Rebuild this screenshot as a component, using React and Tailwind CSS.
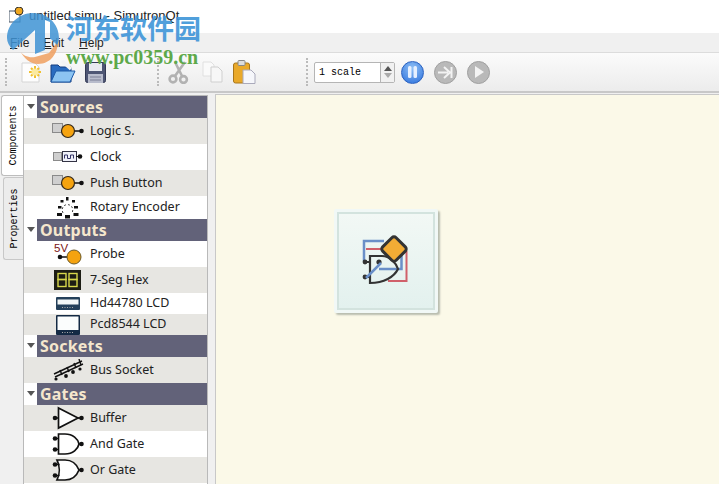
const sans = { fontFamily: '"Noto Sans", "Open Sans", sans-serif' };

function Pin({ x = 0, y = 0 }) { return <circle cx={x} cy={y} r="2.3" fill="#111" />; }

const Icons = {
  logic: () => (<svg width="32" height="20" viewBox="0 0 32 20"><rect x="0.5" y="2.5" width="10" height="9" fill="#cfcfcf" stroke="#8a8a8a" /><line x1="16" y1="10" x2="30" y2="10" stroke="#111" strokeWidth="1.5" /><Pin x={29.5} y={10} /><circle cx="16" cy="10" r="6.5" fill="#f5a30f" stroke="#33281a" strokeWidth="1.2" /></svg>),
  clock: () => (<svg width="32" height="20" viewBox="0 0 32 20"><rect x="1.5" y="5.5" width="8" height="8" fill="#cfcfcf" stroke="#8a8a8a" /><rect x="10.5" y="4.5" width="14" height="10" fill="#eef0f8" stroke="#334" /><path d="M12.5 11.5V8h3v3.5h3V8h3v3.5" fill="none" stroke="#336" /><line x1="24" y1="9.5" x2="29" y2="9.5" stroke="#111" /><Pin x={28} y={9.5} /></svg>),
  rotary: () => (<svg width="32" height="22" viewBox="0 0 32 22"><g fill="#111"><rect x="14" y="0" width="2.5" height="3.5" /><rect x="8.5" y="3" width="3" height="2.5" /><rect x="20" y="3" width="3" height="2.5" /><rect x="6" y="9" width="3.5" height="2.5" /><rect x="22" y="9" width="4" height="2.5" /><rect x="5" y="16" width="5" height="3" /><rect x="21.5" y="16" width="5" height="3" /><rect x="13" y="18" width="5" height="3.5" /></g><path d="M11 16C9 12 11 8 15 7.5C20 7.5 22 12 20 16" fill="none" stroke="#444" strokeDasharray="2 2" /></svg>),
  probe: () => (<svg width="32" height="26" viewBox="0 0 32 26"><text x="2" y="11" fontSize="11.5" fill="#7a1414" fontFamily="Liberation Sans">5V</text><line x1="8" y1="16" x2="18" y2="16" stroke="#111" strokeWidth="1.5" /><Pin x={8} y={16} /><circle cx="22" cy="16" r="7" fill="#f5a30f" stroke="#6b5a2a" /></svg>),
  seg: () => (<svg width="32" height="20" viewBox="0 0 32 20"><rect x="2" width="27" height="20" fill="#1d1d14" /><g fill="none" stroke="#d8d84a" strokeWidth="1.4"><rect x="6" y="3.5" width="8" height="6" /><rect x="6" y="9.5" width="8" height="7" /><rect x="17" y="3.5" width="8" height="6" /><rect x="17" y="9.5" width="8" height="7" /></g></svg>),
  hd: () => (<svg width="32" height="13" viewBox="0 0 32 13"><rect x="4" y="0" width="24" height="13" rx="1" fill="#24405a" /><rect x="5.5" y="2.5" width="21" height="5" fill="#f3f7f7" /><path d="M10 10.5h12" stroke="#aaa" strokeDasharray="1 1.5" /></svg>),
  pcd: () => (<svg width="32" height="20" viewBox="0 0 32 20"><rect x="4" y="0" width="24" height="20" rx="1" fill="#142a44" /><rect x="5.5" y="1.5" width="21" height="13.5" fill="#fbfdfd" /><path d="M10 17.5h12" stroke="#aaa" strokeDasharray="1 1.5" /></svg>),
  bus: () => (<svg width="32" height="22" viewBox="0 0 32 22"><g stroke="#111" strokeWidth="1.4"><line x1="2" y1="15" x2="30" y2="2" /><line x1="3" y1="18" x2="31" y2="5" /><line x1="8" y1="11" x2="10" y2="16" /><line x1="15" y1="8" x2="17" y2="13" /><line x1="22" y1="4" x2="24" y2="9" /><line x1="27" y1="0" x2="29" y2="6" /></g><g fill="#111"><circle cx="4" cy="20" r="1.6" /><circle cx="14" cy="17" r="1.9" /><circle cx="21" cy="13" r="1.9" /><circle cx="28" cy="10" r="1.6" /></g></svg>),
  buffer: () => (<svg width="32" height="24" viewBox="0 0 32 24"><path d="M6.5 2L26 12L6.5 22Z" fill="#fff" stroke="#111" strokeWidth="1.7" /><line x1="2" y1="12" x2="6" y2="12" stroke="#111" strokeWidth="1.5" /><line x1="26" y1="12" x2="30" y2="12" stroke="#111" strokeWidth="1.5" /><Pin x={3} y={12} /><Pin x={29.5} y={12} /></svg>),
  and: () => (<svg width="32" height="24" viewBox="0 0 32 24"><path d="M6.5 2H13C21 2 26 7 27 12C26 17 21 22 13 22H6.5Z" fill="#fff" stroke="#111" strokeWidth="1.7" /><path d="M2 6.5H6.5M2 17.5H6.5M27 12H31" stroke="#111" strokeWidth="1.5" /><Pin x={3} y={6.5} /><Pin x={3} y={17.5} /><Pin x={29.5} y={12} /></svg>),
  or: () => (<svg width="32" height="24" viewBox="0 0 32 24"><path d="M5 2H13C21 2 25 7 27 12C25 17 21 22 13 22H5C8 16 8 8 5 2Z" fill="#fff" stroke="#111" strokeWidth="1.7" /><path d="M2 6.5H7.5M2 17.5H7.5M27 12H31" stroke="#111" strokeWidth="1.5" /><Pin x={3} y={6.5} /><Pin x={3} y={17.5} /><Pin x={29.5} y={12} /></svg>),
};

const sections = [
  { title: 'Sources', rows: [
    ['Logic S.', 'logic', 'h-[26px]', true], ['Clock', 'clock', 'h-[26px]', false], ['Push Button', 'logic', 'h-[26px]', true], ['Rotary Encoder', 'rotary', 'h-[23px]', false] ] },
  { title: 'Outputs', rows: [
    ['Probe', 'probe', 'h-[26px]', false], ['7-Seg Hex', 'seg', 'h-[26px]', true], ['Hd44780 LCD', 'hd', 'h-[21px]', false], ['Pcd8544 LCD', 'pcd', 'h-[21px]', true] ] },
  { title: 'Sockets', rows: [['Bus Socket', 'bus', 'h-[26px]', true]] },
  { title: 'Gates', rows: [
    ['Buffer', 'buffer', 'h-[26px]', true], ['And Gate', 'and', 'h-[26px]', false], ['Or Gate', 'or', 'h-[26px]', true] ] },
];

function Grip() { return <div className="w-[3px] h-[28px] mx-[2px] border-l-2 border-dotted border-[#bbb]" />; }

function RoundBtn({ blue, children }) {
  return (
    <div className={blue ? 'w-[23px] h-[23px] rounded-full flex items-center justify-center bg-[radial-gradient(circle_at_50%_30%,#8fc0f5,#2a6fdc)] border border-[#2b62c0]' : 'w-[23px] h-[23px] rounded-full flex items-center justify-center bg-[#b9b9b9] border border-[#a0a0a0]'}>
      {children}
    </div>
  );
}

export default function App() {
  return (
    <div className="relative w-[719px] h-[484px] overflow-hidden bg-[#f0f0f0] text-black" style={sans}>
      {/* title bar */}
      <div className="h-[33px] bg-white flex items-center pl-[9px] pb-[1px] text-[13px] text-[#222]">
        <svg width="20" height="18" viewBox="0 0 20 18"><rect x="0" y="4" width="11" height="11" fill="none" stroke="#456" /><circle cx="10" cy="4" r="4" fill="#f0a820" stroke="#333" /></svg>
        <span style={{ fontFamily: '"Liberation Sans", sans-serif' }}>untitled.simu - SimutronQt</span>
      </div>
      {/* menu */}
      <div className="h-[20px] bg-[#f0f0f0] flex items-center gap-[14px] pl-[10px] text-[12px] text-[#222] border-b border-[#dcdcdc]" style={{ fontFamily: '"Liberation Sans", sans-serif' }}>
        <span><u>F</u>ile</span><span><u>E</u>dit</span><span className="ml-[1px]"><u>H</u>elp</span>
      </div>
      {/* toolbar */}
      <div className="h-[40px] flex items-center bg-gradient-to-b from-[#fbfbfb] to-[#ececec] border-b-2 border-[#c8c8c8] pl-[3px]">
        <Grip />
        <svg className="ml-[10px]" width="24" height="24" viewBox="0 0 24 24"><path d="M2 3H15L19 7V22H2Z" fill="#fdfdfd" stroke="#d5d5d5" /><g stroke="#f0c030" strokeWidth="2"><path d="M15 6V18M9 12H21M11 8L19 16M19 8L11 16" /></g><circle cx="15" cy="12" r="3.5" fill="#fbeaa0" /></svg>
        <svg className="ml-[6px]" width="26" height="24" viewBox="0 0 26 24"><path d="M1 5H8L10 7H21V22H1Z" fill="#2a6cc0" stroke="#173f80" /><path d="M6 11H25L20 22H1Z" fill="#8cc4f2" stroke="#1d5aa8" /><path d="M12 1L21 9" stroke="#f4f4f4" strokeWidth="3.5" /></svg>
        <svg className="ml-[9px]" width="21" height="21" viewBox="0 0 21 21"><rect x="0.5" y="0.5" width="20" height="20" rx="2" fill="#4e5674" stroke="#333a55" /><rect x="4" y="1" width="13" height="8" fill="#e8eaf0" /><rect x="3" y="12" width="15" height="9" fill="#b8bccc" /><path d="M5 15H16M5 18H16" stroke="#7a7f95" /></svg>
        <div className="ml-[49px]"><Grip /></div>
        <svg className="ml-[6px]" width="21" height="23" viewBox="0 0 21 23"><g fill="none" stroke="#b2b2b2" strokeWidth="2.6"><circle cx="5" cy="18" r="3.4" /><circle cx="15.5" cy="18.5" r="3.4" /><path d="M7 15L17 1M14 15L7 1" /></g></svg>
        <svg className="ml-[13px]" width="21" height="22" viewBox="0 0 21 22"><path d="M1 1H9L12 4V15H1Z" fill="#fafafa" stroke="#e0e0e0" /><path d="M9 6H16L20 10V21H9Z" fill="#f7f7f7" stroke="#cfcfcf" /></svg>
        <svg className="ml-[10px]" width="23" height="24" viewBox="0 0 23 24"><rect x="0.5" y="3" width="16" height="20" rx="2" fill="#e9a92a" stroke="#a8761a" /><rect x="5" y="0.5" width="7" height="5" rx="1" fill="#ddd" stroke="#888" /><path d="M10 10H18L22 14V23.5H10Z" fill="#f6f7fb" stroke="#aab" /></svg>
        <div className="ml-[48px]"><Grip /></div>
        <div className="ml-[3px] flex items-center w-[81px] h-[21px] bg-white border border-[#b5b5b5] rounded-[2px]">
          <span className="flex-1 pl-[4px] text-[10px] whitespace-pre" style={{ fontFamily: '"Liberation Mono", monospace' }}>1 scale</span>
          <div className="w-[14px] h-full flex flex-col items-center justify-around border-l border-[#b5b5b5] bg-[#f1f1f1] py-[2px]">
            <div className="w-0 h-0 border-x-[4px] border-x-transparent border-b-[5px] border-b-[#555]" />
            <div className="w-0 h-0 border-x-[4px] border-x-transparent border-t-[5px] border-t-[#aaa]" />
          </div>
        </div>
        <div className="flex items-center gap-[10px] ml-[6px]">
          <RoundBtn blue><svg width="11" height="12" viewBox="0 0 11 12"><rect x="1" y="0" width="3.5" height="12" rx="1.5" fill="#e6f0ff" /><rect x="6.5" y="0" width="3.5" height="12" rx="1.5" fill="#e6f0ff" /></svg></RoundBtn>
          <RoundBtn><svg width="15" height="13" viewBox="0 0 15 13"><path d="M0 6.5H10M6 1L12 6.5L6 12M13.5 1V12" fill="none" stroke="#f3f3f3" strokeWidth="2" /></svg></RoundBtn>
          <RoundBtn><svg width="10" height="12" viewBox="0 0 10 12"><path d="M1 0L10 6L1 12Z" fill="#f3f3f3" /></svg></RoundBtn>
        </div>
      </div>
      {/* main */}
      <div className="flex h-[391px]">
        {/* vertical tabs */}
        <div className="w-[23px] pt-[2px] flex flex-col items-end">
          <div className="w-[22px] h-[81px] bg-white border border-r-0 border-[#bdbdbd] rounded-l-[3px] flex items-center justify-center">
            <span className="text-[10px] -rotate-90 whitespace-nowrap" style={{ fontFamily: '"Liberation Mono", monospace' }}>Components</span>
          </div>
          <div className="w-[20px] h-[83px] mt-[1px] bg-[#ececec] border border-r-0 border-[#c8c8c8] rounded-l-[3px] flex items-center justify-center">
            <span className="text-[10px] -rotate-90 whitespace-nowrap" style={{ fontFamily: '"Liberation Mono", monospace' }}>Properties</span>
          </div>
        </div>
        {/* panel */}
        <div className="w-[185px] mt-[2px] h-full overflow-hidden border border-b-0 border-[#b9b9b9] bg-white">
          {sections.map((s) => (
            <div key={s.title}>
              <div className="h-[22px] flex bg-white">
                <div className="w-[13px] flex items-center justify-center pb-[2px]">
                  <div className="w-0 h-0 border-x-[4px] border-x-transparent border-t-[5px] border-t-[#555]" />
                </div>
                <div className="flex-1 bg-[#626279] text-[#f5e7cd] font-bold text-[16px] leading-[22px] pl-[3px] tracking-[0.2px]">{s.title}</div>
              </div>
              {s.rows.map(([label, icon, h, shade]) => {
                const Ic = Icons[icon];
                return (
                  <div key={label} className={`${h} flex items-center ${shade ? 'bg-[#e7e6e2]' : 'bg-white'}`}>
                    <div className="w-[28px]" />
                    <div className="w-[32px] flex items-center"><Ic /></div>
                    <span className="ml-[6px] text-[12.5px] text-[#222]">{label}</span>
                  </div>
                );
              })}
            </div>
          ))}
        </div>
        {/* splitter */}
        <div className="w-[7px]" />
        {/* canvas */}
        <div className="flex-1 mt-[1px] border-l border-t border-[#c8c8c8] bg-[#fbf9e8] relative">
          <div className="absolute left-[118px] top-[114px] w-[104px] h-[104px] bg-[#f1f8f6] rounded-[2px] shadow-[2px_2px_2px_#b8bcae] p-[3px]">
            <div className="w-full h-full border-2 border-[#d3e3de] bg-gradient-to-b from-[#f2f8f5] to-[#e3f1ee] flex items-center justify-center">
              <svg width="56" height="56" viewBox="0 0 56 56">
                <path d="M26 8H6V28" fill="none" stroke="#6a8fc8" strokeWidth="2.5" />
                <path d="M8 16H26" stroke="#d0606a" strokeWidth="2" />
                <path d="M48.5 18V48H30" fill="none" stroke="#d0606a" strokeWidth="2" />
                <path d="M43.5 21V36H21" fill="none" stroke="#6a8fc8" strokeWidth="2.5" />
                <path d="M12 23H24C32 23 38 30 40 36C36 44 26 50 12 50Z" fill="none" stroke="#333" strokeWidth="2.2" />
                <path d="M7 29H12M7 44H12" stroke="#333" strokeWidth="2" />
                <circle cx="7" cy="29" r="2.4" fill="#333" /><circle cx="7" cy="44" r="2.4" fill="#333" /><circle cx="21" cy="29" r="2.6" fill="#333" />
                <path d="M8 45L23 30" stroke="#6a8fc8" strokeWidth="2.5" />
                <rect x="26.5" y="6.5" width="19" height="19" rx="3" transform="rotate(45 36 16)" fill="#f2ac35" stroke="#333" strokeWidth="3" />
              </svg>
            </div>
          </div>
        </div>
      </div>
      {/* watermark */}
      <div className="absolute left-[5px] top-[10px] w-[60px] h-[56px] pointer-events-none opacity-85">
        <svg width="60" height="56" viewBox="0 0 60 56">
          <path d="M15 41C18 46 24 48 30 47L44 43L53 31C53 43 46 54 33 54C25 54 19 48 15 41Z" fill="#f0a060" />
          <path d="M28 3C43 3 54 14 54 28C54 31 53 33 52 35L45 28V12L40 10V40L30 44V20L8 40C4 36 2 32 2 28C2 14 14 3 28 3Z" fill="#3f93d4" />
        </svg>
      </div>
      <div className="absolute left-[66px] top-[10px] text-[27px] leading-[36px] font-bold text-[#3e95d8] pointer-events-none whitespace-nowrap opacity-90" style={{ fontFamily: '"Noto Sans CJK SC", sans-serif' }}>河东软件园</div>
      <div className="absolute left-[66px] top-[46px] text-[20px] leading-[22px] font-bold text-[#5ea94a] pointer-events-none whitespace-nowrap" style={{ fontFamily: '"Liberation Serif", serif' }}>www.pc0359.cn</div>
    </div>
  );
}
